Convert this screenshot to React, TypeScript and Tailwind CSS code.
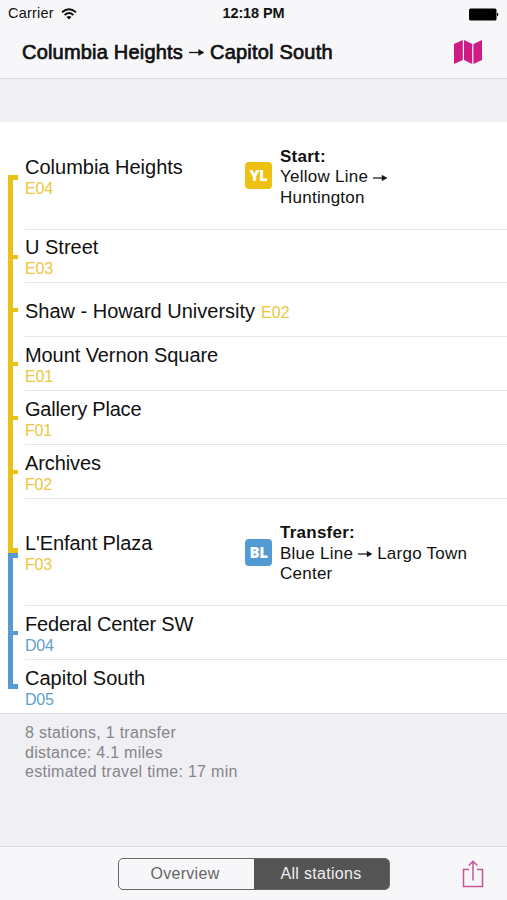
import React from 'react';

type Line = 'yellow' | 'blue';

interface Station {
  name: string;
  code: string;
  codeLine: Line;
  // line above and below the stop
  above?: Line;
  below?: Line;
  inline?: boolean;
  height: string;
  tracking?: string;
  change?: {
    line: Line;
    badge: string;
    title: string;
    first: [string, string];
    second: string;
  };
}

const stations: Station[] = [
  {
    name: 'Columbia Heights',
    code: 'E04',
    codeLine: 'yellow',
    below: 'yellow',
    height: 'h-[108px]',
    change: { line: 'yellow', badge: 'YL', title: 'Start:', first: ['Yellow Line', ''], second: 'Huntington' },
  },
  { name: 'U Street', code: 'E03', codeLine: 'yellow', above: 'yellow', below: 'yellow', height: 'h-[53px]' },
  { name: 'Shaw - Howard University', code: 'E02', codeLine: 'yellow', above: 'yellow', below: 'yellow', inline: true, height: 'h-[54px]' },
  { name: 'Mount Vernon Square', code: 'E01', codeLine: 'yellow', above: 'yellow', below: 'yellow', height: 'h-[54px]', tracking: 'tracking-[-0.08px]' },
  { name: 'Gallery Place', code: 'F01', codeLine: 'yellow', above: 'yellow', below: 'yellow', height: 'h-[54px]', tracking: 'tracking-[-0.2px]' },
  { name: 'Archives', code: 'F02', codeLine: 'yellow', above: 'yellow', below: 'yellow', height: 'h-[54px]', tracking: 'tracking-[-0.1px]' },
  {
    name: "L'Enfant Plaza",
    code: 'F03',
    codeLine: 'yellow',
    above: 'yellow',
    below: 'blue',
    height: 'h-[107px]',
    tracking: 'tracking-[-0.08px]',
    change: { line: 'blue', badge: 'BL', title: 'Transfer:', first: ['Blue Line', 'Largo Town'], second: 'Center' },
  },
  { name: 'Federal Center SW', code: 'D04', codeLine: 'blue', above: 'blue', below: 'blue', height: 'h-[54px]', tracking: 'tracking-[-0.18px]' },
  { name: 'Capitol South', code: 'D05', codeLine: 'blue', above: 'blue', height: 'h-[53px]' },
];

const textColor = { yellow: 'text-[#ebc740]', blue: 'text-[#5f9fce]' };
const badgeColor = { yellow: 'bg-[#edc012]', blue: 'bg-[#519ad3]' };
const trackColor = { yellow: 'border-[#ebc019]', blue: 'border-[#579ad0]' };

const Arrow: React.FC<{ className: string }> = ({ className }) => (
  <svg viewBox="0 0 14 8" className={className} fill="currentColor">
    <rect x="0" y="3.4" width="10.5" height="1.2" />
    <path d="M9 1.2 L14 4 L9 6.8 Z" stroke="currentColor" strokeWidth="0.4" />
  </svg>
);

const Track: React.FC<{ above?: Line; below?: Line }> = ({ above, below }) => {
  const wide = above !== below;
  return (
    <div className="ml-2 flex w-[10px] shrink-0 flex-col">
      <div
        className={above ? `flex-1 border-l-5 ${wide ? 'border-b-5' : 'border-b-2'} ${trackColor[above]}` : 'h-[53px]'}
      />
      <div className={`flex-1 ${below ? `border-l-5 ${wide ? 'border-t-5' : 'border-t-2'} ${trackColor[below]}` : ''}`} />
    </div>
  );
};

const StationRow: React.FC<{ station: Station; last: boolean }> = ({ station, last }) => {
  const { name, code, codeLine, above, below, inline, height, tracking, change } = station;
  return (
    <div className={`flex ${height}`}>
      <Track above={above} below={below} />
      <div className={`ml-[7px] flex flex-1 items-center ${last ? '' : 'border-b border-[#e6e6e8]'}`}>
        {inline ? (
          <div className="flex items-baseline gap-[6px] pt-[2px]">
            <span className="text-[20px] leading-6">{name}</span>
            <span className={`text-[16px] leading-5 ${textColor[codeLine]}`}>{code}</span>
          </div>
        ) : (
          <div className="w-[220px] shrink-0 pt-[2px]">
            <div className={`text-[20px] leading-[23px] whitespace-nowrap ${tracking ?? ''}`}>{name}</div>
            <div className={`text-[16px] leading-[19px] tracking-[-0.2px] ${textColor[codeLine]}`}>{code}</div>
          </div>
        )}
        {change && (
          <>
            <div
              className={`flex h-[27px] w-[27px] shrink-0 items-center justify-center rounded-[4px] font-['Open_Sans'] text-[15px] font-extrabold tracking-[-0.4px] text-white ${badgeColor[change.line]}`}
            >
              {change.badge}
            </div>
            <div className="ml-2 pt-1 text-[17px] leading-[20.5px] tracking-[0.25px]">
              <div className="font-bold">{change.title}</div>
              <div className="flex items-center whitespace-nowrap">
                {change.first[0]}
                <Arrow className="mr-[5px] ml-[5px] h-[8px] w-[14px]" />
                {change.first[1]}
              </div>
              <div>{change.second}</div>
            </div>
          </>
        )}
      </div>
    </div>
  );
};

export default function App() {
  return (
    <div className="flex h-[900px] w-[507px] flex-col overflow-hidden bg-[#efeff4] font-['Liberation_Sans',Arial,sans-serif] text-[#111]">
      <header className="flex h-[79px] flex-col border-b border-[#dcdce0] bg-[#f7f7f9]">
        {/* Status bar */}
        <div className="grid h-7 grid-cols-3 items-center px-2 text-[14.5px]">
          <div className="flex items-center gap-[7px]">
            <span className="tracking-[0.2px]">Carrier</span>
            <svg viewBox="0 0 16 12" className="h-3 w-4" fill="none" stroke="#111" strokeWidth="1.9">
              <path d="M1 4.2 Q8 -1.8 15 4.2" />
              <path d="M3.6 7 Q8 3.2 12.4 7" />
              <path d="M8 11.5 L5.5 9 Q8 7.2 10.5 9 Z" fill="#111" stroke="none" />
            </svg>
          </div>
          <div className="text-center font-bold tracking-[-0.1px] whitespace-nowrap">12:18 PM</div>
          <svg viewBox="0 0 31 13" className="h-[13px] w-[31px] justify-self-end" fill="#000">
            <rect x="1" y="0.5" width="27.5" height="12" rx="1.5" />
            <path d="M29 4.5 Q31.5 6.5 29 8.5 Z" />
          </svg>
        </div>
        {/* Title */}
        <div className="flex h-12 items-center justify-between pr-[25px] pl-[22px]">
          <h1 className="flex items-center text-[20px] font-normal tracking-[0.2px] whitespace-nowrap [-webkit-text-stroke:0.7px_#111]">
            Columbia Heights
            <Arrow className="mr-[6px] ml-[6px] h-[9px] w-[15px]" />
            Capitol South
          </h1>
          <svg viewBox="0 0 28 24" className="h-6 w-7" fill="#cf1b84">
            <path d="M0 4 L8.8 0 V20 L0 24 Z" />
            <path d="M10 0 L18.2 4 V24 L10 20 Z" />
            <path d="M19.4 4 L28 0 V20 L19.4 24 Z" />
          </svg>
        </div>
      </header>

      <main className="mt-[43px] border-b border-[#dedee2] bg-white">
        {stations.map((station, i) => (
          <StationRow key={station.code} station={station} last={i === stations.length - 1} />
        ))}
      </main>

      <div className="flex-1 pt-[9px] pl-[25px] text-[16px] leading-[19.5px] tracking-[0.28px] text-[#858589]">
        <div>8 stations, 1 transfer</div>
        <div>distance: 4.1 miles</div>
        <div>estimated travel time: 17 min</div>
      </div>

      <footer className="grid h-[54px] grid-cols-[1fr_272px_1fr] items-center border-t border-[#dcdce0] bg-[#f7f7f9]">
        <div className="col-start-2 grid h-8 grid-cols-2 overflow-hidden rounded-[5px] border border-[#666] text-[16px] tracking-[0.3px]">
          <button className="pr-[2px] text-[#666]">Overview</button>
          <button className="bg-[#545454] text-[#efefef]">All stations</button>
        </div>
        <button className="mr-[23px] justify-self-end">
          <svg viewBox="0 0 22 28" className="block h-7 w-[22px]" fill="none" stroke="#c65597" strokeWidth="1.5">
            <path d="M7 9.5 H1.5 V26.5 H20.5 V9.5 H15" />
            <path d="M11 20.5 V1.5 M6.8 5.5 L11 1.2 L15.2 5.5" />
          </svg>
        </button>
      </footer>
    </div>
  );
}
